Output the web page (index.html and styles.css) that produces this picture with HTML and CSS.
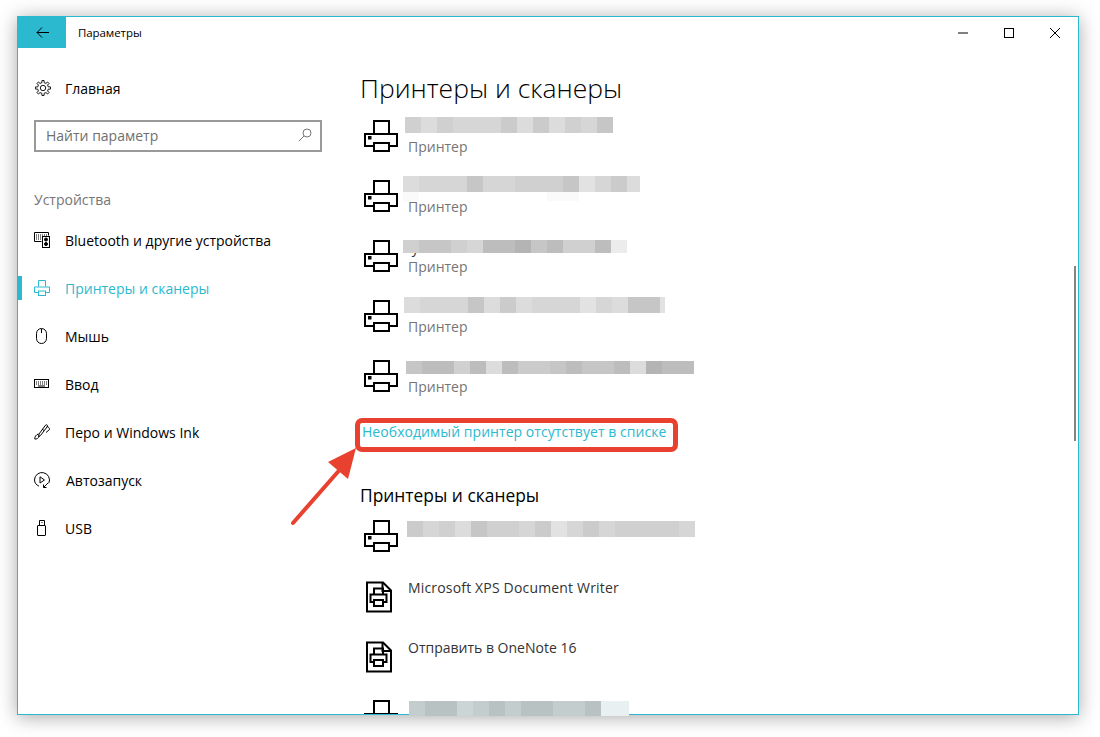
FILE: index.html
```html
<!DOCTYPE html>
<html lang="ru">
<head>
<meta charset="utf-8">
<title>Параметры</title>
<link rel="stylesheet" href="styles.css">
</head>
<body>
<svg width="0" height="0" class="defs">
  <defs>
    <g id="printer">
      <path d="M10 13V1H25V13"/>
      <path d="M10 26H1V14H33V26H25"/>
      <rect x="10" y="23" width="15" height="8"/>
      <rect x="5" y="17" width="1.5" height="1.5" class="dot"/>
    </g>
    <g id="docprinter">
      <path d="M1 1.5H17L25 9.5V30.5H1Z"/>
      <path d="M16.500 1.500V10H25" class="thin"/>
      <path d="M8 13V7.500H17V13"/>
      <path d="M8 21H4.500V13.500H20.500V21H17"/>
      <rect x="8" y="19" width="9" height="6"/>
    </g>
  </defs>
</svg>
<div class="window">
  <header class="titlebar">
    <button class="back"><svg width="13" height="11" viewBox="0 0 13 11"><path d="M6 .5L1 5.500L6 10.500M1 5.500H13" class="line"/></svg></button>
    <span class="apptitle">Параметры</span>
    <div class="controls">
      <span class="ctl"><svg width="12" height="12" viewBox="0 0 12 12"><path d="M1 6H11" class="line"/></svg></span>
      <span class="ctl"><svg width="12" height="12" viewBox="0 0 12 12"><rect x="1.500" y="1.500" width="9" height="9" class="line"/></svg></span>
      <span class="ctl"><svg width="12" height="12" viewBox="0 0 12 12"><path d="M1 1L11 11M11 1L1 11" class="line"/></svg></span>
    </div>
  </header>
  <div class="content">
    <aside class="sidebar">
      <a class="navitem home">
        <span class="navicon"><svg width="18" height="18" viewBox="0 0 20 20" class="gear">
          <defs><path id="tooth" d="M15.540 7.700L15.870 8.750L18.300 8.800V11.200L15.870 11.250L15.540 12.300"/></defs>
          <use href="#tooth"/><use href="#tooth" transform="rotate(45 10 10)"/><use href="#tooth" transform="rotate(90 10 10)"/><use href="#tooth" transform="rotate(135 10 10)"/><use href="#tooth" transform="rotate(180 10 10)"/><use href="#tooth" transform="rotate(225 10 10)"/><use href="#tooth" transform="rotate(270 10 10)"/><use href="#tooth" transform="rotate(315 10 10)"/>
          <circle cx="10" cy="10" r="3"/>
        </svg></span>
        Главная
      </a>
      <div class="search">
        <span>Найти параметр</span>
        <svg width="14" height="14" viewBox="0 0 14 14"><circle cx="9" cy="5" r="4"/><path d="M6 8L1 13"/></svg>
      </div>
      <div class="section">Устройства</div>
      <nav class="navlist">
        <a class="navitem">
          <span class="navicon"><svg width="16" height="16" viewBox="0 0 16 16">
            <path d="M7.500 9.500H.5V.5H14.500V3.500"/>
            <path d="M2 3H13M2 5H7M2 7H7" class="dash"/>
            <rect x="8.500" y="4.500" width="7" height="11"/>
            <circle cx="12" cy="7.500" r="1.500" class="fill"/><circle cx="12" cy="12" r="1.500" class="fill"/>
          </svg></span>
          Bluetooth и другие устройства
        </a>
        <a class="navitem active">
          <span class="navicon"><svg width="16" height="16" viewBox="0 0 16 16">
            <path d="M4.500 6.500V.5H11.500V6.500"/>
            <path d="M4 12.500H.5V7H15.500V12.500H12"/>
            <rect x="4.500" y="11" width="7" height="4.500"/>
          </svg></span>
          Принтеры и сканеры
        </a>
        <a class="navitem">
          <span class="navicon"><svg width="16" height="16" viewBox="0 0 16 16">
            <rect x="2.500" y=".5" width="10" height="15" rx="5"/>
            <path d="M7.500 1V5"/>
          </svg></span>
          Мышь
        </a>
        <a class="navitem">
          <span class="navicon"><svg width="16" height="10" viewBox="0 0 16 10">
            <rect x=".5" y=".5" width="14" height="8"/>
            <path d="M2 3H13M2 5H13" class="dash"/><path d="M4 7H11"/>
          </svg></span>
          Ввод
        </a>
        <a class="navitem">
          <span class="navicon"><svg width="16" height="16" viewBox="0 0 16 16">
            <path d="M5 10L11.500 1.200C12.300 .3 13.500 .8 13.500 2L13 3L6.500 11.500L4.500 12.500Z"/>
            <path d="M8 5L10 6.500"/>
            <path d="M4.500 10C2 10.500 .5 13 .8 15C2.500 15.500 4.500 14 5.500 12"/>
            <path d="M13 2.500C14.500 3 15.800 4.200 15.500 5.500L12 8.500"/>
          </svg></span>
          Перо и Windows Ink
        </a>
        <a class="navitem autorun">
          <span class="navicon"><svg width="16" height="16" viewBox="0 0 16 16">
            <path d="M5 14.200C2.300 13 .5 10.800 .5 8A7.500 7.500 0 1 1 14.800 11.200"/>
            <path d="M6 4.800L10.500 8L6 11Z"/>
            <path d="M9.500 12.500V15.500H12.500M9.700 15.300L14 11"/>
          </svg></span>
          Автозапуск
        </a>
        <a class="navitem">
          <span class="navicon"><svg width="16" height="16" viewBox="0 0 16 16">
            <path d="M5.500 6V.5H10.500V6"/>
            <rect x="3.500" y="5.500" width="8" height="10" rx=".5"/>
            <path d="M7 2.500H7.500M8.500 2.500H9"/>
          </svg></span>
          USB
        </a>
      </nav>
    </aside>
    <main class="main">
      <h1 class="title">Принтеры и сканеры</h1>
      <div class="row">
        <svg class="picon" width="34" height="32" viewBox="0 0 34 32"><use href="#printer"/></svg>
        <div class="rowtext"><div class="name"></div><div class="sub">Принтер</div></div>
        <div class="blur b1"><i class="s4"></i><i class="s2"></i><i class="s4"></i><i class="s3"></i><i class="s3"></i><i class="s3"></i><i class="s5"></i><i class="s2"></i><i class="s5"></i><i class="s2"></i><i class="s4"></i><i class="s3"></i><i class="s6"></i></div>
      </div>
      <div class="row">
        <svg class="picon" width="34" height="32" viewBox="0 0 34 32"><use href="#printer"/></svg>
        <div class="rowtext"><div class="name"></div><div class="sub">Принтер</div></div>
        <div class="blur b2"><i class="s2"></i><i class="s3"></i><i class="s3"></i><i class="s3"></i><i class="s6"></i><i class="s3"></i><i class="s3"></i><i class="s4"></i><i class="s4"></i><i class="s4"></i><i class="s6"></i><i class="s1"></i><i class="s3"></i><i class="s5"></i><i class="s2"></i></div>
        <div class="faint f1"></div><div class="faint f2"></div>
      </div>
      <div class="row">
        <svg class="picon" width="34" height="32" viewBox="0 0 34 32"><use href="#printer"/></svg>
        <div class="rowtext"><div class="name">&nbsp;у</div><div class="sub">Принтер</div></div>
        <div class="blur b3"><i class="s4"></i><i class="s6"></i><i class="s6"></i><i class="s4"></i><i class="s3"></i><i class="s7"></i><i class="s7"></i><i class="s8"></i><i class="s6"></i><i class="s7"></i><i class="s4"></i><i class="s4"></i><i class="s7"></i><i class="s0"></i></div>
      </div>
      <div class="row">
        <svg class="picon" width="34" height="32" viewBox="0 0 34 32"><use href="#printer"/></svg>
        <div class="rowtext"><div class="name"></div><div class="sub">Принтер</div></div>
        <div class="blur b4"><i class="s2"></i><i class="s3"></i><i class="s3"></i><i class="s3"></i><i class="s6"></i><i class="s2"></i><i class="s5"></i><i class="s2"></i><i class="s3"></i><i class="s3"></i><i class="s3"></i><i class="s1"></i><i class="s3"></i><i class="s2"></i><i class="s6"></i><i class="s6"></i><i class="s1"></i></div>
      </div>
      <div class="row">
        <svg class="picon" width="34" height="32" viewBox="0 0 34 32"><use href="#printer"/></svg>
        <div class="rowtext"><div class="name"></div><div class="sub">Принтер</div></div>
        <div class="blur b5"><i class="s6"></i><i class="s7"></i><i class="s7"></i><i class="s4"></i><i class="s7"></i><i class="s2"></i><i class="s7"></i><i class="s5"></i><i class="s5"></i><i class="s6"></i><i class="s7"></i><i class="s6"></i><i class="s6"></i><i class="s7"></i><i class="s2"></i><i class="s8"></i><i class="s7"></i><i class="s7"></i></div>
      </div>
      <a class="link">Необходимый принтер отсутствует в списке</a>
      <h2 class="subtitle">Принтеры и сканеры</h2>
      <div class="row">
        <svg class="picon" width="34" height="32" viewBox="0 0 34 32"><use href="#printer"/></svg>
        <div class="blur b6"><i class="s5"></i><i class="s3"></i><i class="s4"></i><i class="s2"></i><i class="s6"></i><i class="s4"></i><i class="s4"></i><i class="s3"></i><i class="s5"></i><i class="s1"></i><i class="s3"></i><i class="s5"></i><i class="s3"></i><i class="s4"></i><i class="s4"></i><i class="s4"></i><i class="s4"></i><i class="s3"></i></div>
      </div>
      <div class="row">
        <svg class="picon doc" width="26" height="32" viewBox="0 0 26 32"><use href="#docprinter"/></svg>
        <div class="rowtext"><div class="name wide">Microsoft XPS Document Writer</div></div>
      </div>
      <div class="row">
        <svg class="picon doc" width="26" height="32" viewBox="0 0 26 32"><use href="#docprinter"/></svg>
        <div class="rowtext"><div class="name">Отправить в OneNote 16</div></div>
      </div>
      <div class="row">
        <svg class="picon" width="34" height="32" viewBox="0 0 34 32"><use href="#printer"/></svg>
      </div>
    </main>
    <div class="scrollthumb"></div>
  </div>
</div>
<div class="lastblur"><i class="t1"></i><i class="t2"></i><i class="t2"></i><i class="t3"></i><i class="t1"></i><i class="t2"></i><i class="t1"></i><i class="t2"></i><i class="t2"></i><i class="t1"></i><i class="t1"></i><i class="t2"></i><i class="t0"></i><i class="t0"></i></div>
<div class="callout"></div>
<svg class="arrow" width="80" height="90" viewBox="0 0 80 90">
  <path d="M4 75L54 18" class="shaft"/>
  <path d="M67 0L39 14L59 31Z" class="head"/>
</svg>
</body>
</html>
```
FILE: styles.css
```css
* { box-sizing: border-box; }
html, body { margin: 0; height: 100%; }
body {
  position: relative;
  width: 1100px;
  height: 737px;
  overflow: hidden;
  background: #fff;
  padding: 16px 0 0 17px;
  font-family: "Open Sans", "Noto Sans", sans-serif;
  font-size: 14px;
  color: #000;
}
.defs { position: absolute; }
.window {
  position: relative;
  width: 1062px;
  height: 699px;
  background: #fff;
  border: 1px solid #2bb9d0;
  box-shadow: 0 2px 18px rgba(0, 0, 0, .35);
  overflow: hidden;
  display: flex;
  flex-direction: column;
}
.titlebar { height: 31px; display: flex; align-items: center; flex: none; }
.back {
  width: 48px;
  height: 31px;
  background: #2bb9d0;
  border: 0;
  padding: 0;
  display: flex;
  align-items: center;
  justify-content: center;
}
.line { fill: none; stroke: #000; stroke-width: 1; }
.apptitle { margin-left: 12px; font-size: 11.500px; letter-spacing: -.08px; }
.controls { margin-left: auto; display: flex; margin-right: 0; }
.ctl { width: 46px; height: 31px; display: flex; align-items: center; justify-content: center; }
.content { flex: 1; display: flex; min-height: 0; position: relative; }
.sidebar { width: 342px; flex: none; padding-top: 16px; }
.navitem {
  position: relative;
  height: 48px;
  display: flex;
  align-items: center;
  padding-left: 16px;
}
.navicon { width: 31px; flex: none; display: flex; align-items: center; }
.navicon svg { fill: none; stroke: #000; stroke-width: 1; overflow: visible; }
.navicon .fill { fill: #000; }
.navicon .dash { stroke-dasharray: 1 1; }
.navicon rect { fill: #fff; }
.autorun .navicon { width: 32px; }
.active { color: #2bb9d0; }
.active .navicon svg { stroke: #2bb9d0; }
.active::before {
  content: "";
  position: absolute;
  left: 0;
  top: 12px;
  width: 4px;
  height: 24px;
  background: #2bb9d0;
}
.search {
  margin: 8px 0 0 16px;
  width: 288px;
  height: 32px;
  border: 2px solid #999;
  display: flex;
  align-items: center;
  justify-content: space-between;
  padding: 0 8px 2px 10px;
  color: #6f6f6f;
}
.search svg { fill: none; stroke: #777; stroke-width: 1; }
.section { margin: 38px 0 6px 16px; height: 20px; line-height: 20px; color: #767676; }
.main { flex: 1; padding: 24px 0 0 0; min-width: 0; }
.title {
  margin: 0;
  height: 34px;
  line-height: 32px;
  font-size: 26.500px;
  font-weight: 300;
}
.row { position: relative; height: 60px; display: flex; padding-left: 4px; }
.picon { flex: none; margin-top: 14px; fill: none; stroke: #000; stroke-width: 2; }
.picon .dot { fill: #000; stroke: none; }
.picon.doc { margin: 15px 16px 0 2px; }
.picon .thin { stroke-width: 1; }
.rowtext { margin-left: 10px; padding-top: 12px; }
.picon.doc + .rowtext { margin-left: 0; }
.name { height: 20px; line-height: 20px; color: #333; }
.wide { letter-spacing: .17px; }
.sub { height: 18px; line-height: 18px; color: #757575; }
.blur { position: absolute; display: flex; height: 16px; overflow: hidden; }
.blur i, .lastblur i { flex: none; width: 16px; height: 100%; display: block; }
.b1 { left: 45px; top: 11px; }
.b2 { left: 43px; top: 10px; width: 237px; }
.b3 { left: 43px; top: 14px; height: 13px; }
.b4 { left: 44px; top: 11px; width: 261px; }
.b5 { left: 46px; top: 15px; height: 13px; }
.b6 { left: 47px; top: 15px; }
.s0 { background: #ececec; }
.s1 { background: #e2e2e2; }
.s2 { background: #dcdcdc; }
.s3 { background: #d6d6d6; }
.s4 { background: #d0d0d0; }
.s5 { background: #cbcbcb; }
.s6 { background: #c6c6c6; }
.s7 { background: #bdbdbd; }
.s8 { background: #b4b4b4; }
.faint { position: absolute; top: 26px; height: 9px; background: #fafafa; }
.f1 { left: 43px; width: 16px; }
.f2 { left: 187px; width: 32px; }
.link {
  display: block;
  margin-top: 16px;
  padding-left: 2px;
  height: 20px;
  line-height: 20px;
  color: #2bb9d0;
  letter-spacing: .05px;
}
.subtitle {
  margin: 43px 0 1px;
  height: 20px;
  line-height: 20px;
  font-size: 17.400px;
  font-weight: 400;
}
.scrollthumb {
  position: absolute;
  right: 2px;
  top: 218px;
  width: 2px;
  height: 175px;
  background: #858585;
}
.lastblur {
  position: absolute;
  left: 409px;
  top: 701px;
  width: 220px;
  height: 15px;
  display: flex;
  overflow: hidden;
}
.t0 { background: #e8f0f2; }
.t1 { background: #c3cdce; }
.t2 { background: #b8c2c3; }
.t3 { background: #ccd5d6; }
.callout {
  position: absolute;
  left: 355px;
  top: 418px;
  width: 323px;
  height: 34px;
  border: 5px solid #e8412f;
  border-radius: 7px;
}
.arrow { position: absolute; left: 289px; top: 448px; }
.shaft { fill: none; stroke: #e8412f; stroke-width: 4; stroke-linecap: round; }
.head { fill: #e8412f; }
```
